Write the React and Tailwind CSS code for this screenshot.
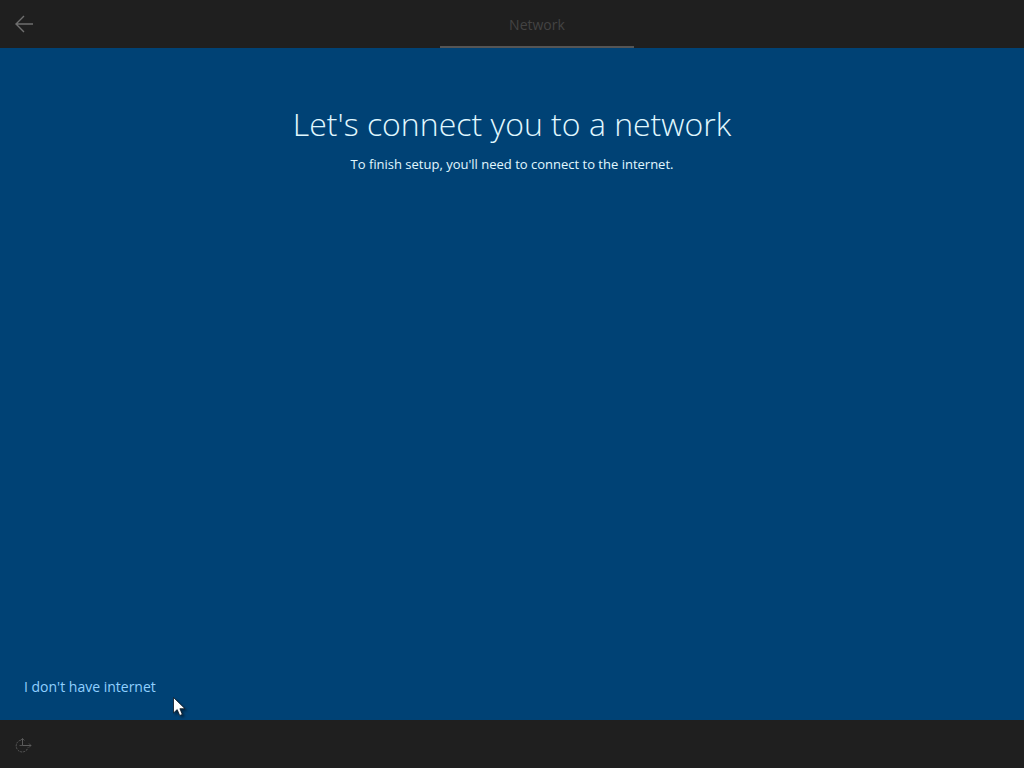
function BackIcon() {
  return (
    <svg width="20" height="20" viewBox="0 0 20 20" fill="none" stroke="#6f6f6f" strokeWidth="1.4" aria-hidden="true">
      <path d="M19 10H2M10 2L2 10L10 18" />
    </svg>
  );
}

function EaseOfAccessIcon() {
  return (
    <svg width="18" height="18" viewBox="0 0 18 18" fill="none" stroke="#5c5c5c" strokeWidth="1" aria-hidden="true">
      <path d="M6.5 4.2A6 6 0 1 0 14 11.5" strokeDasharray="2 1" />
      <path d="M8.5 2.5V9.5H17" />
      <path d="M6.5 4.5L8.5 2.5L10.5 4.5M15 7.5L17 9.5L15 11.5M5.5 9.5H8.5" strokeWidth="0.8" />
    </svg>
  );
}

function Pointer() {
  return (
    <svg
      className="pointer-events-none absolute bottom-0 left-[173px] drop-shadow-[2px_2px_1px_rgba(0,0,0,0.4)]"
      width="14"
      height="23"
      viewBox="0 0 14 23"
      aria-hidden="true"
    >
      <path d="M0.5 0.5V16L4.2 12.6L6.7 18.5L9.3 17.4L6.9 11.7H12Z" fill="#ffffff" stroke="#0b1622" strokeWidth="0.8" />
    </svg>
  );
}

export default function App() {
  return (
    <div className="flex min-h-screen flex-col bg-[#004275] font-['Open_Sans','Noto_Sans',sans-serif] text-white">
      <header className="flex h-12 shrink-0 bg-[#1f1f1f]">
        <button type="button" aria-label="Back" className="flex w-[50px] items-center pl-[14px]">
          <BackIcon />
        </button>
        <nav className="flex flex-1 justify-center" aria-label="Setup steps">
          <a
            href="#network"
            aria-current="step"
            className="flex w-1/5 items-center justify-center border-b-2 border-[#555555] pt-1 text-sm text-[#434343]"
          >
            Network
          </a>
        </nav>
      </header>

      <main className="relative flex flex-1 flex-col px-6 pt-14 pb-[21px]">
        <div className="text-center">
          <h1 className="text-[32px] leading-10 font-light text-[#e0f8ff]">Let's connect you to a network</h1>
          <p className="mt-2.5 text-[13px] leading-5 text-[#e0f8ff]">
            To finish setup, you'll need to connect to the internet.
          </p>
        </div>
        <a href="#offline" className="mt-auto self-start text-sm leading-6 text-[#90d0ff]">
          I don't have internet
        </a>
        <Pointer />
      </main>

      <footer className="flex h-12 shrink-0 items-center bg-[#1f1f1f] px-[14px] pt-0.5">
        <button type="button" aria-label="Ease of Access">
          <EaseOfAccessIcon />
        </button>
      </footer>
    </div>
  );
}
